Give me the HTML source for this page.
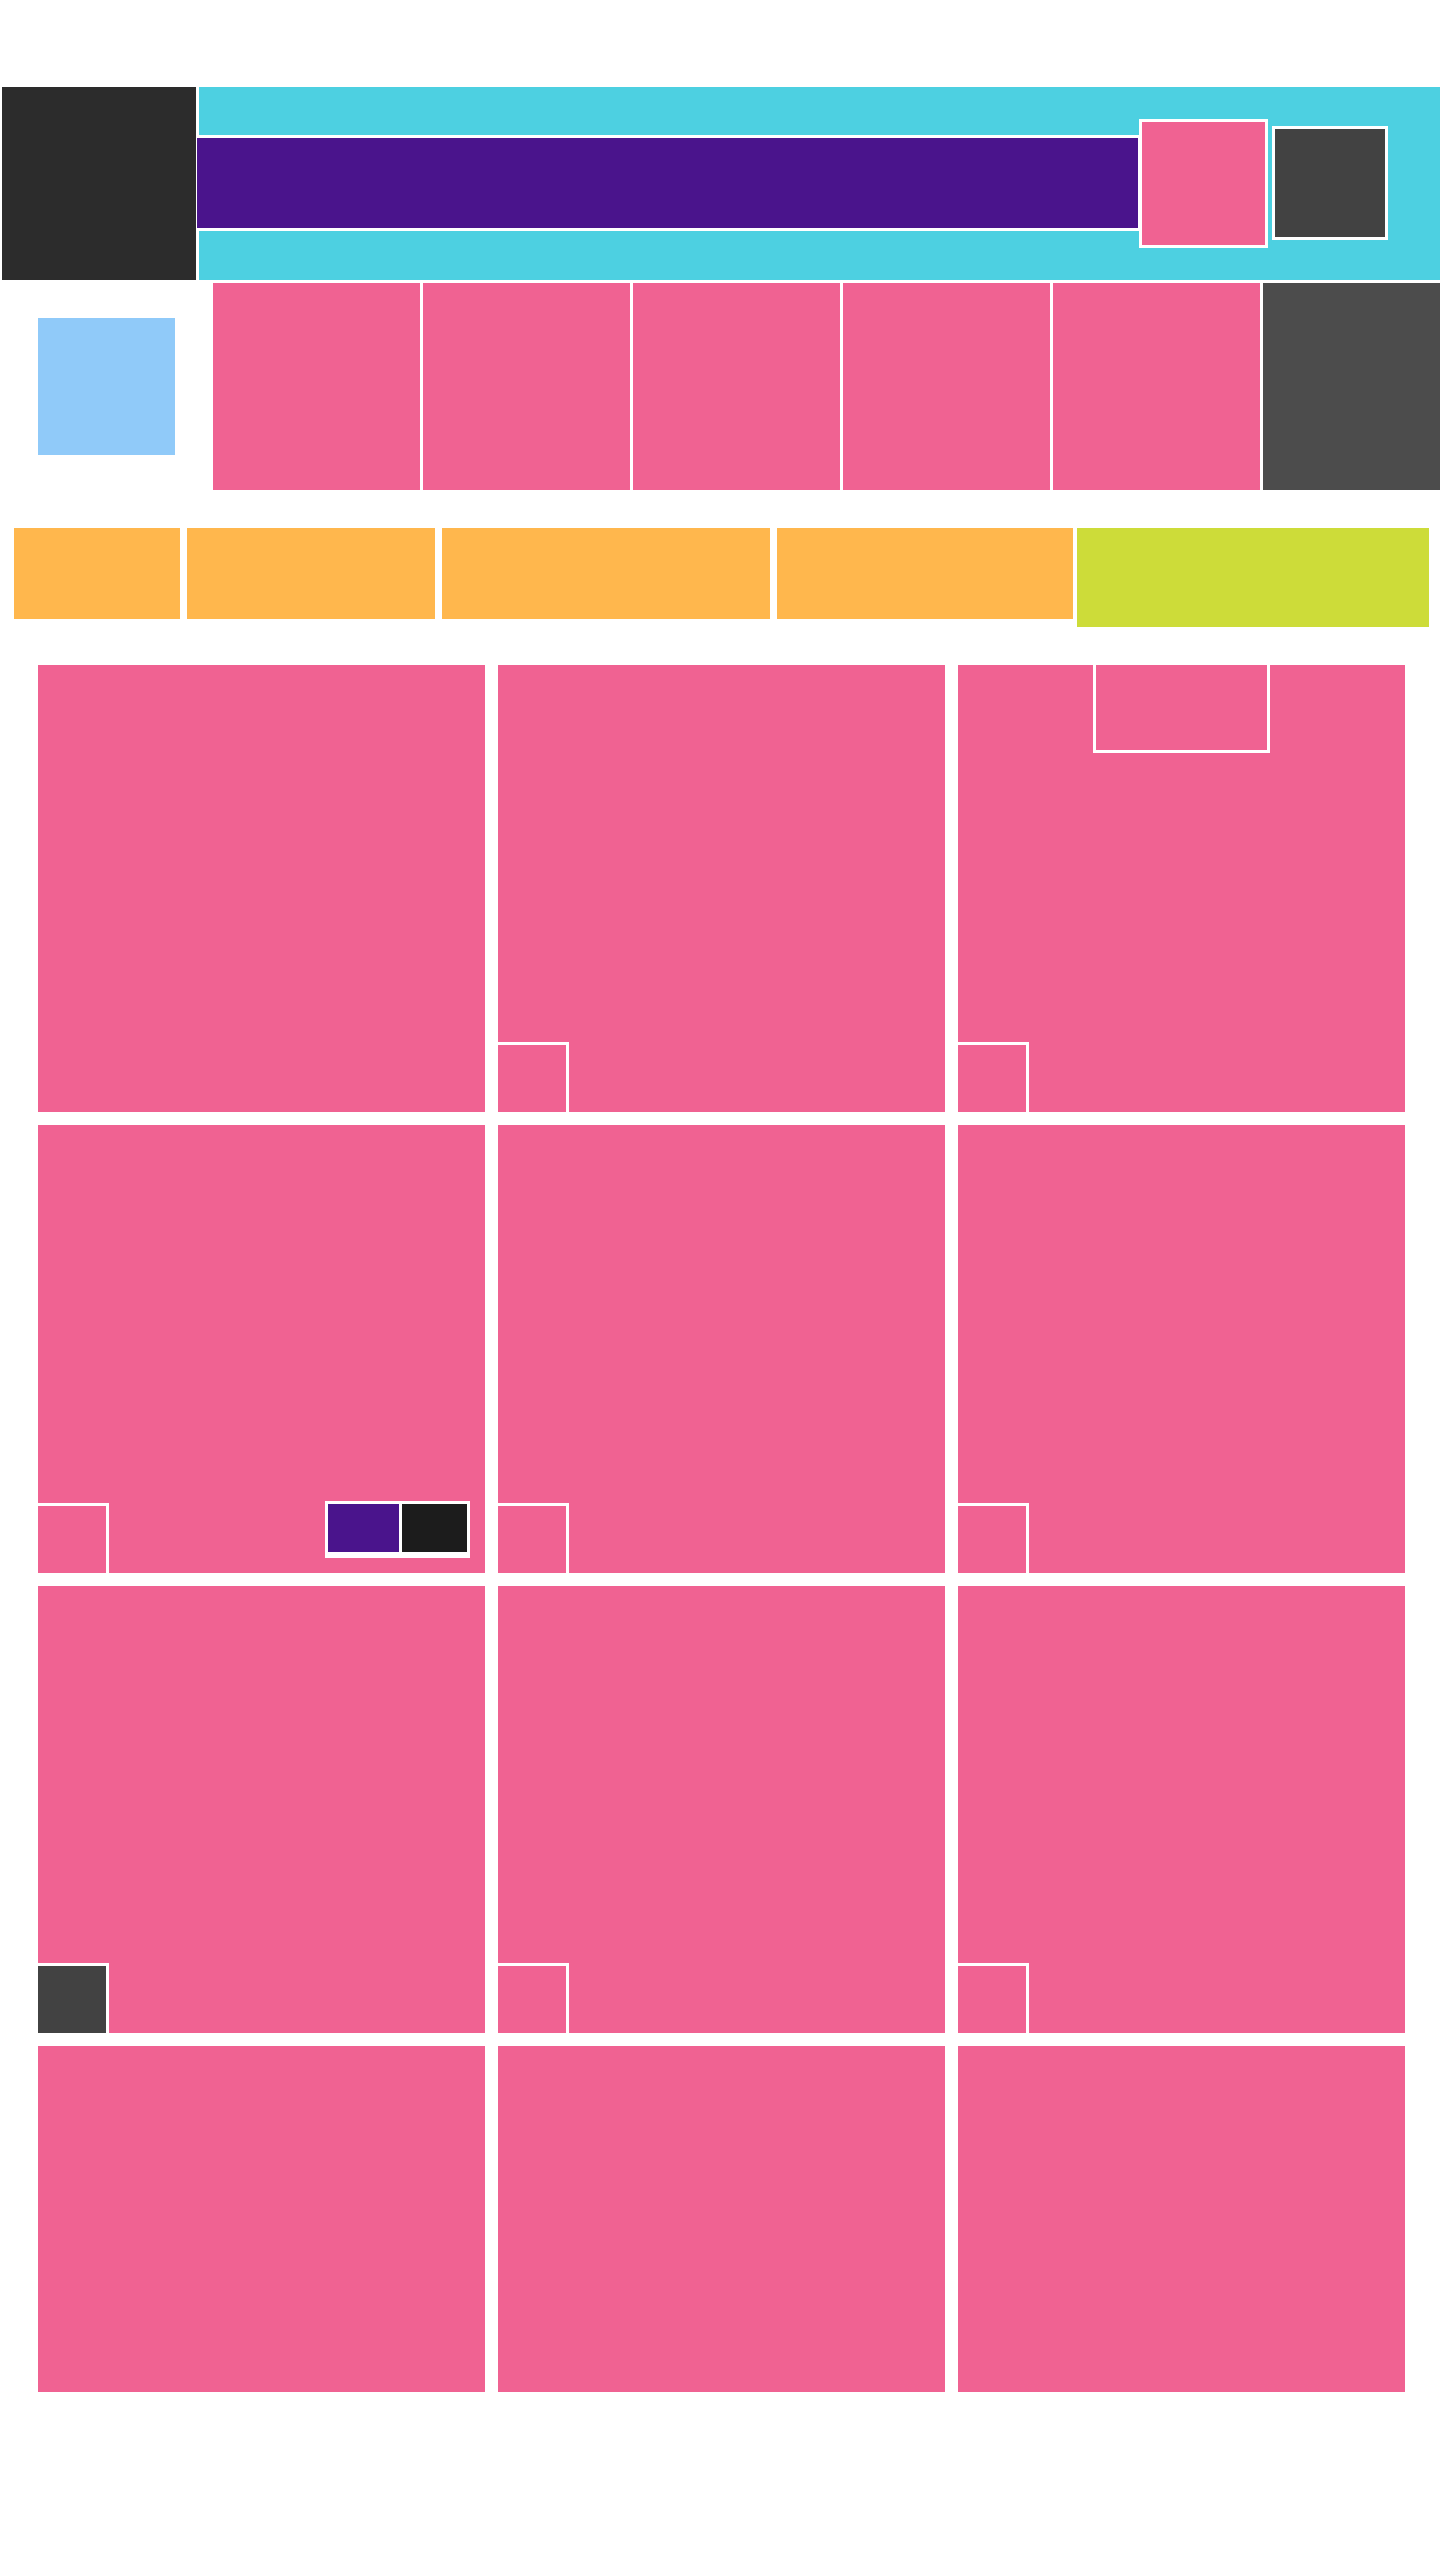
<!DOCTYPE html>
<html><head><meta charset="utf-8"><style>
html,body{margin:0;padding:0;background:#fff;width:1440px;height:2560px;overflow:hidden;position:relative}
div{position:absolute;box-sizing:border-box}
.p{background:#f06292}
.sq{width:71px;height:70px;border-top:3px solid #fff;border-right:3px solid #fff;background:#f06292}
</style></head><body>
<div style="left:2px;top:87px;width:194px;height:193px;background:#2c2c2c"></div>
<div style="left:199px;top:87px;width:1241px;height:193px;background:#4dd0e1"></div>
<div style="left:197px;top:135px;width:944px;height:96px;background:#4a148c;border:3px solid #fff;border-left:none"></div>
<div style="left:1139px;top:119px;width:129px;height:129px;background:#f06292;border:3px solid #fff"></div>
<div style="left:1272px;top:126px;width:116px;height:114px;background:#424242;border:3px solid #fff"></div>
<div style="left:38px;top:318px;width:137px;height:137px;background:#90caf9"></div>
<div class="p" style="left:213px;top:283px;width:207px;height:207px"></div>
<div class="p" style="left:423px;top:283px;width:207px;height:207px"></div>
<div class="p" style="left:633px;top:283px;width:207px;height:207px"></div>
<div class="p" style="left:843px;top:283px;width:207px;height:207px"></div>
<div class="p" style="left:1053px;top:283px;width:207px;height:207px"></div>
<div style="left:1263px;top:283px;width:177px;height:207px;background:#4c4c4c"></div>
<div style="left:14px;top:528px;width:166px;height:91px;background:#ffb74d"></div>
<div style="left:187px;top:528px;width:248px;height:91px;background:#ffb74d"></div>
<div style="left:442px;top:528px;width:328px;height:91px;background:#ffb74d"></div>
<div style="left:777px;top:528px;width:296px;height:91px;background:#ffb74d"></div>
<div style="left:1077px;top:528px;width:352px;height:99px;background:#cddc39"></div>

<!-- row 1 -->
<div class="p" style="left:38px;top:665px;width:447px;height:447px"></div>
<div class="p" style="left:498px;top:665px;width:447px;height:447px"><div class="sq" style="left:0;bottom:0"></div></div>
<div class="p" style="left:958px;top:665px;width:447px;height:447px"><div class="sq" style="left:0;bottom:0"></div>
<div style="left:135px;top:0;width:177px;height:88px;border:3px solid #fff;border-top:none"></div></div>
<!-- row 2 -->
<div class="p" style="left:38px;top:1125px;width:447px;height:448px"><div class="sq" style="left:0;bottom:0"></div>
<div style="left:287px;top:376px;width:145px;height:57px;background:#fff"></div>
<div style="left:290px;top:379px;width:71px;height:48px;background:#4a148c"></div>
<div style="left:364px;top:379px;width:65px;height:48px;background:#1c1c1c"></div></div>
<div class="p" style="left:498px;top:1125px;width:447px;height:448px"><div class="sq" style="left:0;bottom:0"></div></div>
<div class="p" style="left:958px;top:1125px;width:447px;height:448px"><div class="sq" style="left:0;bottom:0"></div></div>
<!-- row 3 -->
<div class="p" style="left:38px;top:1586px;width:447px;height:447px"><div class="sq" style="left:0;bottom:0;background:#424242"></div></div>
<div class="p" style="left:498px;top:1586px;width:447px;height:447px"><div class="sq" style="left:0;bottom:0"></div></div>
<div class="p" style="left:958px;top:1586px;width:447px;height:447px"><div class="sq" style="left:0;bottom:0"></div></div>
<!-- row 4 -->
<div class="p" style="left:38px;top:2046px;width:447px;height:346px"></div>
<div class="p" style="left:498px;top:2046px;width:447px;height:346px"></div>
<div class="p" style="left:958px;top:2046px;width:447px;height:346px"></div>
</body></html>
